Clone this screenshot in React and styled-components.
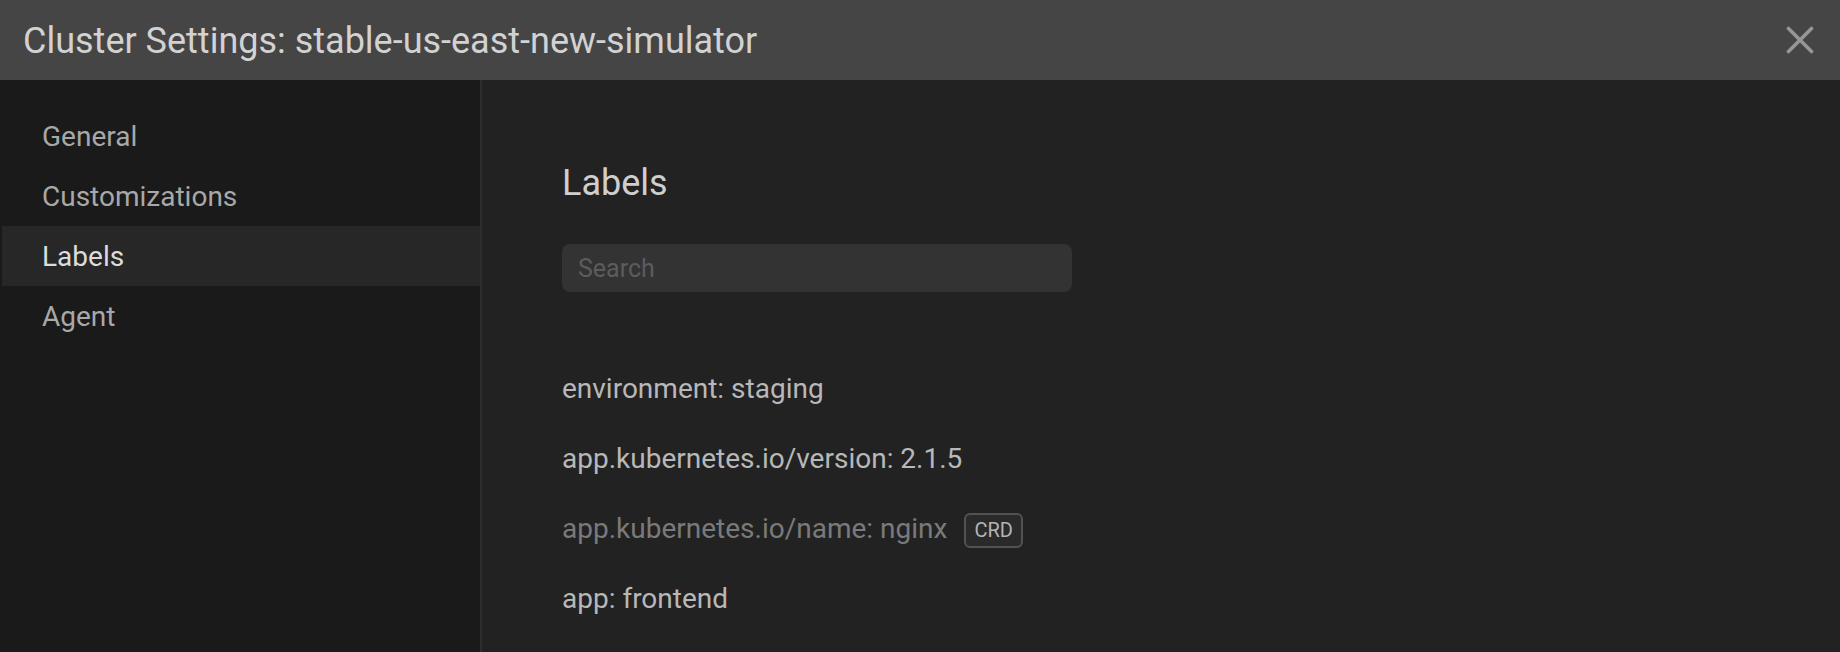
import React from 'react';
import styled, { createGlobalStyle } from 'styled-components';

const GlobalStyle = createGlobalStyle`
  html, body {
    margin: 0;
    padding: 0;
    height: 100%;
    background: #222;
  }
  #root {
    height: 100%;
  }
  * {
    box-sizing: border-box;
  }
`;

const sections = ['General', 'Customizations', 'Labels', 'Agent'];

const labels = [
  { text: 'environment: staging' },
  { text: 'app.kubernetes.io/version: 2.1.5' },
  { text: 'app.kubernetes.io/name: nginx', crd: true },
  { text: 'app: frontend' },
];

const CloseIcon = () => (
  <svg width="28" height="28" viewBox="0 0 28 28">
    <path d="M2.5 2.5 L25.5 25.5 M25.5 2.5 L2.5 25.5" stroke="currentColor" strokeWidth="3.6" strokeLinecap="round" />
  </svg>
);

const App = () => {
  return (
    <Window>
      <GlobalStyle />
      <Header>
        <Title>Cluster Settings: stable-us-east-new-simulator</Title>
        <CloseButton aria-label="Close"><CloseIcon /></CloseButton>
      </Header>
      <Body>
        <Sidebar>
          {sections.map(s => (
            <NavItem key={s} selected={s === 'Labels'}>{s}</NavItem>
          ))}
        </Sidebar>
        <Content>
          <Heading>Labels</Heading>
          <SearchInput placeholder="Search" />
          <LabelList>
            {labels.map(l => (
              <LabelRow key={l.text} dim={l.crd}>
                {l.text}
                {l.crd && <Badge>CRD</Badge>}
              </LabelRow>
            ))}
          </LabelList>
        </Content>
      </Body>
    </Window>
  );
};

const Window = styled.div`
  height: 100%;
  display: flex;
  flex-direction: column;
  font-family: Roboto, "Liberation Sans", sans-serif;
  background: #222;
`;
Window.displayName = 'Window';

const Header = styled.div`
  height: 80px;
  flex-shrink: 0;
  background: #454545;
  display: flex;
  align-items: center;
  justify-content: space-between;
  padding: 2px 26px 0 23px;
`;
Header.displayName = 'Header';

const Title = styled.div`
  font-size: 36px;
  line-height: 78px;
  color: #d2d2d2;
`;
Title.displayName = 'Title';

const CloseButton = styled.div`
  width: 28px;
  height: 28px;
  margin-top: -2px;
  color: #969696;
  display: flex;
  cursor: pointer;
`;
CloseButton.displayName = 'CloseButton';

const Body = styled.div`
  flex: 1;
  display: flex;
  flex-direction: row;
  min-height: 0;
`;
Body.displayName = 'Body';

const Sidebar = styled.div`
  width: 482px;
  flex-shrink: 0;
  background: #1a1a1a;
  border-right: 2px solid #2e2e2e;
  padding: 26px 0 0 2px;
  display: flex;
  flex-direction: column;
`;
Sidebar.displayName = 'Sidebar';

const NavItem = styled.div`
  height: 60px;
  padding: 2px 0 0 40px;
  line-height: 58px;
  font-size: 28px;
  cursor: pointer;
  color: ${props => props.selected ? '#dcdcdc' : '#a8a8a8'};
  background: ${props => props.selected ? '#272727' : 'transparent'};
`;
NavItem.displayName = 'NavItem';

const Content = styled.div`
  flex: 1;
  padding: 82px 0 0 80px;
  display: flex;
  flex-direction: column;
  align-items: flex-start;
`;
Content.displayName = 'Content';

const Heading = styled.h2`
  margin: 0;
  font-size: 36px;
  font-weight: 400;
  line-height: 42px;
  color: #cfcfcf;
`;
Heading.displayName = 'Heading';

const SearchInput = styled.input`
  margin-top: 40px;
  width: 510px;
  height: 48px;
  border: none;
  outline: none;
  border-radius: 8px;
  background: #333;
  padding: 0 16px;
  font-family: Roboto, "Liberation Sans", sans-serif;
  font-size: 25px;
  color: #ccc;
  &::placeholder {
    color: #5c5c5c;
  }
`;
SearchInput.displayName = 'SearchInput';

const LabelList = styled.div`
  margin-top: 61px;
  display: flex;
  flex-direction: column;
`;
LabelList.displayName = 'LabelList';

const LabelRow = styled.div`
  height: 70px;
  padding-top: 2px;
  line-height: 68px;
  font-size: 28px;
  display: flex;
  align-items: center;
  color: ${props => props.dim ? '#7a7a7a' : '#b8b8b8'};
`;
LabelRow.displayName = 'LabelRow';

const Badge = styled.span`
  margin: 3px 0 0 17px;
  height: 35px;
  line-height: 31px;
  padding: 0 8px;
  border: 2px solid #525252;
  border-radius: 6px;
  background: #2a2a2a;
  font-size: 20px;
  color: #b4b4b4;
`;
Badge.displayName = 'Badge';

export default App;
